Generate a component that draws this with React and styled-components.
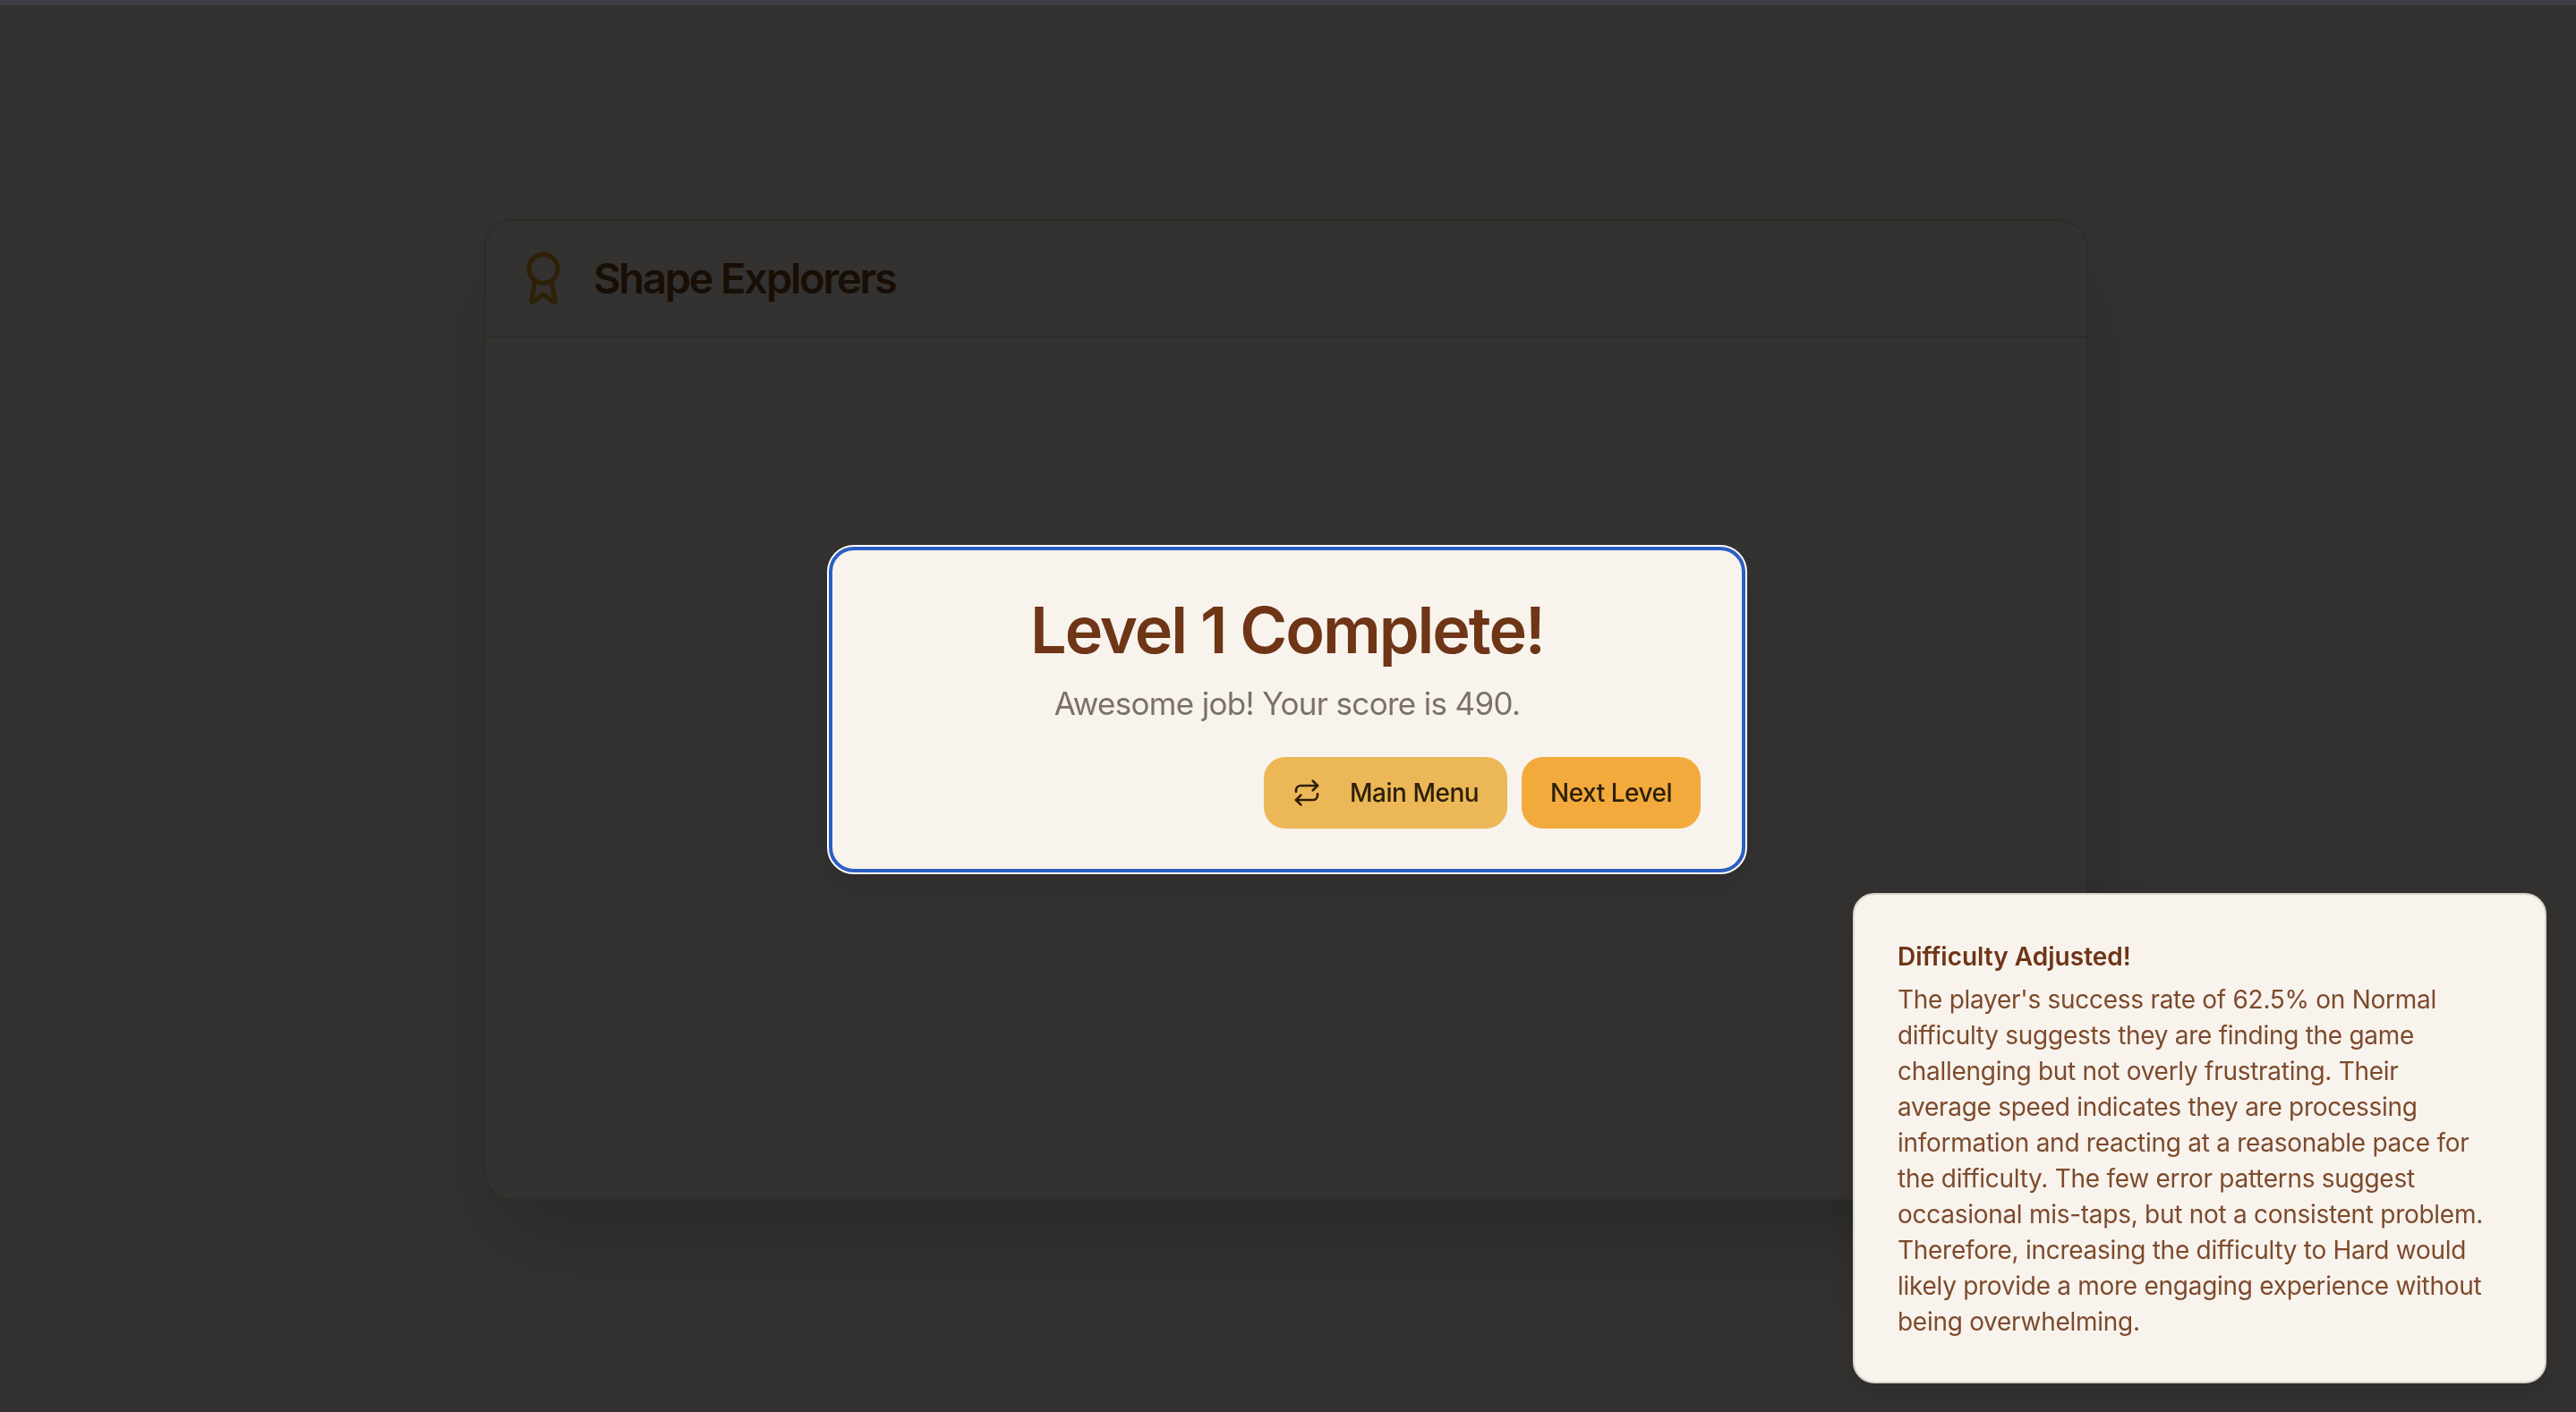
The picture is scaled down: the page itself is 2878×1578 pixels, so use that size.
import { Award, Repeat } from 'lucide-react';
import styled, { createGlobalStyle } from 'styled-components';

const GlobalStyle = createGlobalStyle`
    html, body {
        margin : 0;
        padding : 0;
        height : 100%;
        overflow : hidden;
        background-color : #fdf8f0;
        font-family : Inter, "Liberation Sans", sans-serif;
    }
    * {
        box-sizing : border-box;
    }
`;

const App = () => {
    return (
        <PageStyled>
            <GlobalStyle />
            <TopStripStyled />
            <MainStyled>
                <GameCardStyled>
                    <CardHeaderStyled>
                        <Award size={ 64 } strokeWidth={ 2 } color="#e69f2e" />
                        <GameTitleStyled>Shape Explorers</GameTitleStyled>
                    </CardHeaderStyled>
                </GameCardStyled>
            </MainStyled>

            <OverlayStyled>
                <DialogStyled>
                    <DialogTitleStyled>Level 1 Complete!</DialogTitleStyled>
                    <DialogTextStyled>Awesome job! Your score is 490.</DialogTextStyled>
                    <DialogActionsStyled>
                        <ActionButtonStyled color="#ecb756">
                            <Repeat size={ 32 } strokeWidth={ 2 } />
                            Main Menu
                        </ActionButtonStyled>
                        <ActionButtonStyled color="#f3aa3c">Next Level</ActionButtonStyled>
                    </DialogActionsStyled>
                </DialogStyled>
            </OverlayStyled>

            <ToastStyled>
                <ToastTitleStyled>Difficulty Adjusted!</ToastTitleStyled>
                <ToastTextStyled>
                    The player's success rate of 62.5% on Normal difficulty suggests they are finding the game challenging but not overly frustrating. Their average speed indicates they are processing information and reacting at a reasonable pace for the difficulty. The few error patterns suggest occasional mis-taps, but not a consistent problem. Therefore, increasing the difficulty to Hard would likely provide a more engaging experience without being overwhelming.
                </ToastTextStyled>
            </ToastStyled>
        </PageStyled>
    )
}

const PageStyled = styled.div`
    display : flex;
    flex-direction : column;
    height : 1578px;
`;

const TopStripStyled = styled.div`
    height : 6px;
    flex-shrink : 0;
`;

const MainStyled = styled.main`
    flex : 1;
    display : flex;
    align-items : center;
    justify-content : center;
    padding-right : 4px;
    padding-top : 2px;
`;

const GameCardStyled = styled.section`
    width : 1792px;
    height : 1097px;
    background-color : #fdf8f0;
    border : 2px solid #e4dccc;
    border-radius : 32px;
    box-shadow : 0 50px 100px -24px rgba(0, 0, 0, 0.25);
`;

const CardHeaderStyled = styled.header`
    display : flex;
    align-items : center;
    gap : 24px;
    height : 130px;
    padding : 0 32px;
    border-bottom : 2px solid #e4dccc;
`;

const GameTitleStyled = styled.h1`
    margin : 0;
    font-size : 47px;
    font-weight : 600;
    letter-spacing : -2.2px;
    color : #78461a;
`;

const OverlayStyled = styled.div`
    position : fixed;
    inset : 0;
    display : flex;
    align-items : center;
    justify-content : center;
    padding : 8px 2px 0 0;
    background-color : rgba(0, 0, 0, 0.8);

    &::before {
        content : '';
        position : absolute;
        top : 0;
        left : 0;
        right : 0;
        height : 6px;
        background-color : #3f3e46;
    }
`;

const DialogStyled = styled.div`
    width : 1024px;
    height : 364px;
    padding : 49px 46px 0;
    background-color : #f8f3ed;
    border : 4px solid #2a5fc4;
    border-radius : 28px;
    outline : 2px solid #ffffff;
    outline-offset : 0;
    box-shadow : 0 16px 40px rgba(0, 0, 0, 0.15);
    text-align : center;
`;

const DialogTitleStyled = styled.h2`
    margin : 0;
    font-size : 72px;
    line-height : 80px;
    font-weight : 600;
    letter-spacing : -2.1px;
    color : #6e3516;
`;

const DialogTextStyled = styled.p`
    margin : 18px 0 0;
    font-size : 35px;
    line-height : 48px;
    letter-spacing : -0.68px;
    color : #7a716a;
`;

const DialogActionsStyled = styled.div`
    display : flex;
    justify-content : flex-end;
    gap : 16px;
    margin-top : 36px;
`;

const ActionButtonStyled = styled.button`
    display : inline-flex;
    align-items : center;
    gap : 32px;
    height : 80px;
    padding : 0 32px;
    border : 0;
    border-radius : 24px;
    font-family : inherit;
    font-size : 28px;
    font-weight : 500;
    letter-spacing : -0.5px;
    color : #2d2008;
    background-color : ${({ color }) => color};
`;

const ToastStyled = styled.aside`
    position : fixed;
    right : 33px;
    bottom : 32px;
    width : 775px;
    height : 548px;
    padding : 49px 60px 48px 48px;
    background-color : #f8f3ed;
    border : 2px solid #d9d5c9;
    border-radius : 24px;
    box-shadow : 0 8px 24px rgba(0, 0, 0, 0.12);
`;

const ToastTitleStyled = styled.div`
    font-size : 28px;
    line-height : 40px;
    font-weight : 600;
    color : #6e3516;
`;

const ToastTextStyled = styled.div`
    margin-top : 8px;
    font-size : 28px;
    line-height : 40px;
    letter-spacing : -0.28px;
    color : #7d4a2c;
`;

export default App;
